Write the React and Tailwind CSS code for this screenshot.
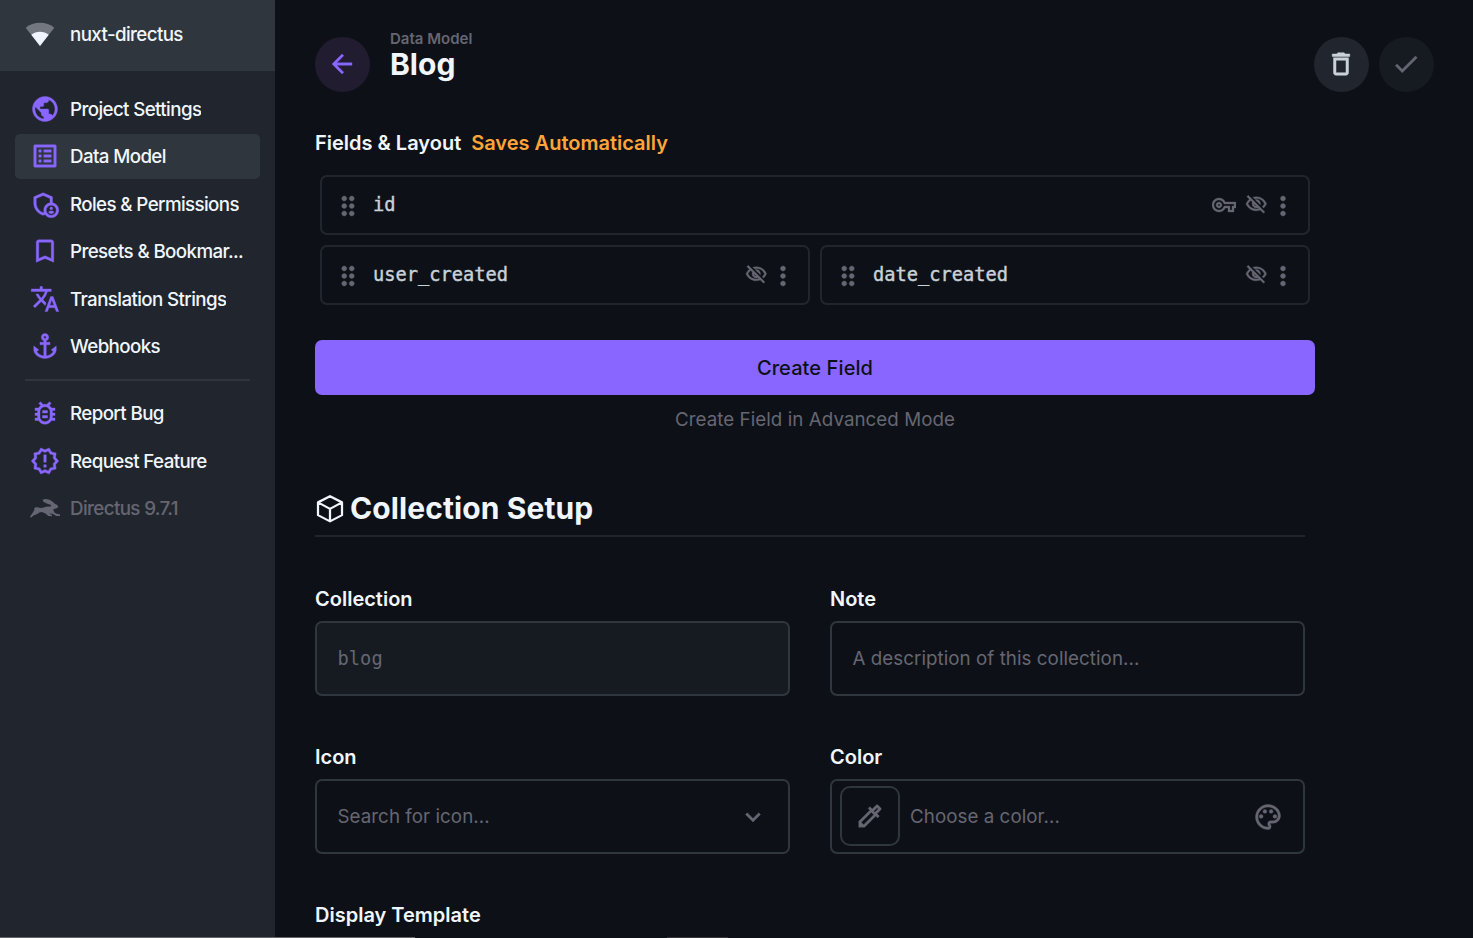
import React from "react";
import {
  MdPublic, MdOutlineListAlt, MdOutlineAdminPanelSettings, MdBookmarkBorder, MdTranslate, MdAnchor,
  MdOutlineBugReport, MdOutlineNewReleases, MdArrowBack, MdOutlineDelete, MdCheck, MdOutlineVpnKey,
  MdOutlineVisibilityOff, MdMoreVert, MdDragIndicator, MdOutlineColorize, MdOutlinePalette, MdExpandMore,
} from "react-icons/md";

function Rabbit() {
  return (
    <svg width="30" height="30" viewBox="0 0 90 90" fill="currentColor" className="block">
      <path d="M0 71 L9 58 Q14 51 13 46 Q15 41 22 43 Q34 47 43 43 Q51 39 61 41 L64 36 Q54 33 45 29 Q38 26 38 20 Q54 14 69 27 L74 32 Q82 34 85 41 Q83 46 75 47 L70 49 Q70 55 74 59 Q82 64 90 64 L90 69 L79 69 Q68 61 59 61 Q60 65 66 66 L66 70 L55 69 Q46 59 35 57 Q27 57 23 62 L16 65 Q10 66 3 74 Z" />
    </svg>
  );
}

function BoxIcon() {
  return (
    <svg width="30" height="30" viewBox="0 0 24 24" fill="none" stroke="currentColor" strokeWidth="1.8" strokeLinejoin="round">
      <path d="M12 1.800 21.600 6.700v10.200L12 21.900 2.400 16.900V6.700Z M2.400 6.700 12 11.900 21.600 6.700 M12 11.900v10" />
    </svg>
  );
}

function NavItem({ icon: Icon, label, active, muted }) {
  return (
    <a className={`flex h-[45px] items-center gap-2.5 rounded-[5px] pl-[15px] pr-[15px] ${active ? "bg-[#30363d]" : ""} ${muted ? "text-[#666672]" : "text-[#f0f6fc]"}`}>
      <span className={`-mt-px shrink-0 ${muted ? "" : "text-[#8866ff]"}`}><Icon size={30} strokeWidth={0.3} className="block" /></span>
      <span className="truncate pt-0.5 text-[18.75px] font-medium tracking-[-0.620px]">{label}</span>
    </a>
  );
}

function Field({ name, isKey }) {
  return (
    <div className="flex h-[60px] flex-1 items-center rounded-[7px] border-2 border-[#21262e] pl-[11px] pr-[10.500px] text-[#666672]">
      <MdDragIndicator size={30} strokeWidth={0.3} className="mt-0.5 shrink-0" />
      <span className="ml-[10px] flex-1 font-['DejaVu_Sans_Mono',monospace] text-[18.7px] text-[#c9d1d9] [-webkit-text-stroke:0.4px]">{name}</span>
      {isKey && <MdOutlineVpnKey size={24} strokeWidth={0.3} className="mr-[9px]" />}
      <MdOutlineVisibilityOff size={22.5} strokeWidth={0.4} className="-mt-px" />
      <MdMoreVert size={30} strokeWidth={0.3} className="mt-0.5" />
    </div>
  );
}

function Labeled({ label, children }) {
  return (
    <div className="w-[475px]">
      <div className="h-[38px] pt-px text-[20px] font-semibold leading-[30px] text-[#f0f6fc]">{label}</div>
      {children}
    </div>
  );
}

const inputClass = "flex h-[75px] items-center rounded-[7px] border-2 border-[#30363d] text-[18.75px] tracking-[0.05px] text-[#666672]";

export default function App() {
  return (
    <div className="relative flex h-[938px] w-full overflow-hidden bg-[#0d1117] font-['Inter',sans-serif] [&_path[fill=none]]:stroke-none">
      <aside className="w-[275px] shrink-0 bg-[#21262e]">
        <div className="flex h-[71px] items-center gap-[15px] bg-[#30363d] pb-1 pl-[25px] text-[#f0f6fc]">
          <svg width="30" height="30" viewBox="0 0 30 30" fill="#f0f4ff">
            <path d="M15 27 .7 8.8C8.5 2 21.500 2 29.300 8.800Z" opacity=".35" />
            <path d="M15 27 6.300 15.800C11 11.700 19 11.700 23.700 15.800Z" />
          </svg>
          <span className="pt-[3px] text-[18.75px] font-medium tracking-[-0.620px]">nuxt-directus</span>
        </div>
        <nav className="flex flex-col gap-[2.5px] px-[15px] pt-[15.500px]">
          <NavItem icon={MdPublic} label="Project Settings" />
          <NavItem icon={MdOutlineListAlt} label="Data Model" active />
          <NavItem icon={MdOutlineAdminPanelSettings} label="Roles & Permissions" />
          <NavItem icon={MdBookmarkBorder} label="Presets & Bookmar..." />
          <NavItem icon={MdTranslate} label="Translation Strings" />
          <NavItem icon={MdAnchor} label="Webhooks" />
          <div className="mx-2.5 my-[7.500px] h-[2px] shrink-0 bg-[#30363d]" />
          <NavItem icon={MdOutlineBugReport} label="Report Bug" />
          <NavItem icon={MdOutlineNewReleases} label="Request Feature" />
          <NavItem icon={Rabbit} label="Directus 9.7.1" muted />
        </nav>
      </aside>

      <main className="flex-1 pl-10">
        <header className="flex h-[129px] items-start pr-[39px] pt-[37px]">
          <button className="flex size-[55px] items-center justify-center rounded-full bg-[#211c30] pb-px pr-px text-[#8866ff]">
            <MdArrowBack size={30} strokeWidth={0.3} />
          </button>
          <div className="ml-5 -mt-2">
            <div className="text-[15px] font-semibold leading-5 text-[#666672]">Data Model</div>
            <h1 className="text-[30px] font-bold leading-[30px] text-[#f0f6fc]">Blog</h1>
          </div>
          <div className="ml-auto flex gap-2.5">
            <button className="flex size-[55px] items-center justify-center rounded-full bg-[#21262e] pb-px pr-px text-[#c9d1d9]">
              <MdOutlineDelete size={30} strokeWidth={0.4} />
            </button>
            <button className="flex size-[55px] items-center justify-center rounded-full bg-[#161b22] pb-px pr-px text-[#666672]">
              <MdCheck size={30} strokeWidth={0.3} />
            </button>
          </div>
        </header>

        <section className="w-[1000px]">
          <div className="flex h-[46px] gap-2.5 text-[20px] font-semibold leading-7 text-[#f0f6fc]">
            <span>Fields &amp; Layout</span>
            <span className="text-[#ffa439]">Saves Automatically</span>
          </div>
          <div className="flex flex-col gap-2.5 px-[5px]">
            <div className="flex"><Field name="id" isKey /></div>
            <div className="flex gap-2.5">
              <Field name="user_created" />
              <Field name="date_created" />
            </div>
          </div>
          <button className="mt-[35px] block h-[55px] w-full rounded-[7px] bg-[#8866ff] text-[20px] font-medium tracking-[0.1px] text-[#0d1117]">Create Field</button>
          <div className="mt-[10px] text-center text-[18.75px] leading-[29px] tracking-[0.05px] text-[#666672]">Create Field in Advanced Mode</div>
        </section>

        <section className="w-[990px]">
          <h2 className="mt-[53px] flex h-[50px] items-center gap-[5px] border-b-2 border-[#21262e] pb-[5px] text-[30px] font-bold tracking-[0.1px] text-[#f0f6fc]">
            <BoxIcon />
            Collection Setup
          </h2>
          <div className="mt-[46px] grid grid-cols-2 gap-x-10 gap-y-[45px]">
            <Labeled label="Collection">
              <div className={`${inputClass} bg-[#161b22] pl-[20.500px] pt-0.5`}>
                <span className="font-['DejaVu_Sans_Mono',monospace] text-[18.7px]">blog</span>
              </div>
            </Labeled>
            <Labeled label="Note">
              <div className={`${inputClass} pl-[20.500px] pt-0.5`}>A description of this collection...</div>
            </Labeled>
            <Labeled label="Icon">
              <div className={`${inputClass} justify-between pl-[20.500px] pr-5`}>
                <span className="pt-0.5">Search for icon...</span>
                <MdExpandMore size={30} strokeWidth={0.3} />
              </div>
            </Labeled>
            <Labeled label="Color">
              <div className={`${inputClass} pl-2 pr-5`}>
                <span className="-mt-0.5 flex size-[60px] items-center justify-center rounded-[10px] border-2 border-[#30363d]">
                  <MdOutlineColorize size={30} strokeWidth={0.3} />
                </span>
                <span className="ml-2.5 flex-1 pt-0.5">Choose a color...</span>
                <MdOutlinePalette size={30} strokeWidth={0.3} />
              </div>
            </Labeled>
            <Labeled label="Display Template" />
          </div>
        </section>
      </main>
      <div className="absolute bottom-0 left-0 h-px w-[415px] bg-[#66666a]" />
      <div className="absolute bottom-0 left-[667px] h-px w-[61px] bg-[#39363d]" />
    </div>
  );
}
